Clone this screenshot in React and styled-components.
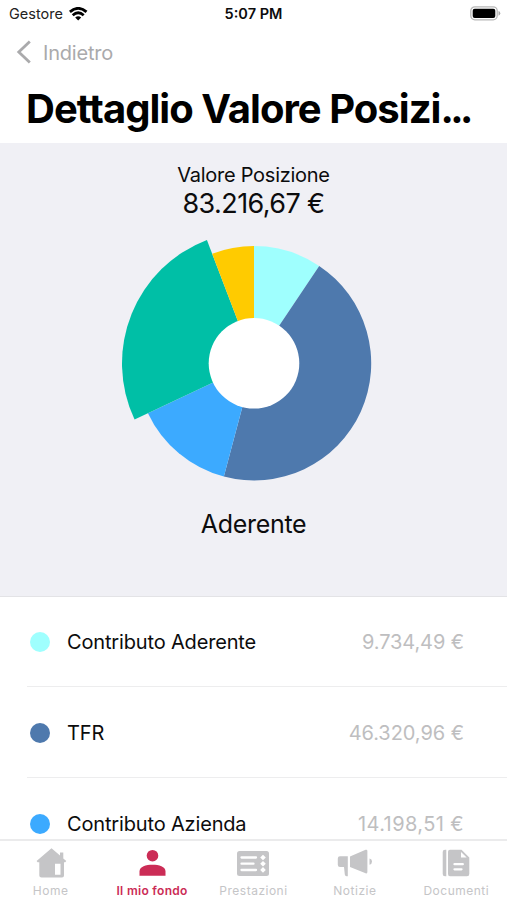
import React from 'react'
import styled, { createGlobalStyle } from 'styled-components'

const slices = [
    { color: '#9ffffe', from: 0, to: 33.8, radius: 117.2 },
    { color: '#4e79ad', from: 33.8, to: 194.9, radius: 117.2 },
    { color: '#3caaff', from: 194.9, to: 244.8, radius: 117.2 },
    { color: '#00bfa6', from: 244.8, to: 339.1, radius: 132 },
    { color: '#ffcb00', from: 339.1, to: 360, radius: 117.2 },
]

const rows = [
    { label: 'Contributo Aderente', value: '9.734,49 €', color: '#9ffffe', space: -0.1 },
    { label: 'TFR', value: '46.320,96 €', color: '#4e79ad', space: -0.05 },
    { label: 'Contributo Azienda', value: '14.198,51 €', color: '#3caaff', space: 0.4 },
]

const point = (angle, radius) => {
    const rad = (angle * Math.PI) / 180
    return `${(Math.sin(rad) * radius).toFixed(2)} ${(-Math.cos(rad) * radius).toFixed(2)}`
}

const slicePath = ({ from, to, radius }) =>
    `M0 0L${point(from, radius)}A${radius} ${radius} 0 ${to - from > 180 ? 1 : 0} 1 ${point(to, radius)}Z`

const HomeIcon = () => (
    <svg width='32' height='30' viewBox='0 0 32 30' fill='currentColor'>
        <path fillRule='evenodd' d='M16.5 0.3L25 7.5V4.5H28.3V10.5L31.3 13L30.2 14.2H29V27.5Q29 29.5 27 29.5H6.5Q4.3 29.5 4.3 27.5V14.2H2.6L1.6 13ZM20 15.8V26.8H25.5V15.8Z' />
    </svg>
)

const PersonIcon = () => (
    <svg width='28' height='28' viewBox='0 0 28 28' fill='currentColor'>
        <circle cx='14.5' cy='6.7' r='5.8' />
        <path d='M1.5 22.5C1.5 17.5 8 15.8 14.5 15.8S27.5 17.5 27.5 22.5V26.8H1.5Z' />
    </svg>
)

const CardIcon = () => (
    <svg width='32' height='25' viewBox='0 0 32 25'>
        <rect width='32' height='25' rx='2.5' fill='currentColor' />
        <path d='M4.5 6.5H19M4.5 12.7H16.5M4.5 19H19' stroke='#fff' strokeWidth='2.3' strokeLinecap='round' />
        <path d='M26 3.7L28.8 6.5L26 9.3L23.2 6.5ZM26 9.9L28.8 12.7L26 15.5L23.2 12.7ZM26 16.1L28.8 18.9L26 21.7L23.2 18.9Z' fill='#fff' />
    </svg>
)

const HornIcon = () => (
    <svg width='36' height='28' viewBox='0 0 36 28' fill='currentColor'>
        <path d='M3 7.2H10.8V27.2H9.6Q8 27.2 7.8 25.5L7 18H3Q.8 18 .8 15.8V9.4Q.8 7.2 3 7.2Z' />
        <path d='M13 7.5L28.6 .8Q30.4 .2 30.4 2V23Q30.4 25 28.6 24.3L13 18Z' />
        <path d='M32.5 9.5Q35 10 35 12.6T32.5 15.7Z' />
    </svg>
)

const DocIcon = () => (
    <svg width='28' height='28' viewBox='0 0 28 28'>
        <path d='M4.3 .7V27.3H3Q.7 27.3 .7 25V3Q.7 .7 3 .7ZM8 .7H19.5L27.3 8.5V25Q27.3 27.3 25 27.3H8Q6 27.3 6 25V2.7Q6 .7 8 .7Z' fill='currentColor' />
        <path d='M19 3V8.5H24.7Z' fill='#fff' />
        <path d='M12.5 15.2H20.8M12.5 20.3H19.5' stroke='#fff' strokeWidth='2.3' strokeLinecap='round' />
    </svg>
)

const tabs = [
    { label: 'Home', icon: HomeIcon, space: 0.6 },
    { label: 'Il mio fondo', icon: PersonIcon, active: true, space: 0.3 },
    { label: 'Prestazioni', icon: CardIcon, space: 0.5 },
    { label: 'Notizie', icon: HornIcon, space: 0.5 },
    { label: 'Documenti', icon: DocIcon, space: 0.5 },
]

export default function App() {
    return (
        <>
            <GlobalStyle />
            <Screen>
                <StatusBar>
                    <Carrier>
                        Gestore
                        <svg width='19' height='14' viewBox='0 0 19 14' fill='none' stroke='#000' strokeWidth='2.8'>
                            <path d='M.9 4.9Q9.2 -2.2 17.5 4.9M3.7 8.2Q9.2 3.4 14.7 8.2' />
                            <path d='M6.2 10.4Q9.2 8 12.2 10.4L9.2 13.5Z' fill='#000' stroke='none' />
                        </svg>
                    </Carrier>
                    <Clock>5:07 PM</Clock>
                    <Battery>
                        <svg width='31' height='15' viewBox='0 0 31 15'>
                            <rect x='.8' y='.8' width='26.4' height='13' rx='4' fill='#fff' stroke='#b8b8b8' strokeWidth='1.3' />
                            <rect x='2.7' y='2.7' width='22.6' height='9.2' rx='2' fill='#000' />
                            <path d='M28.5 5Q30.3 5.6 30.3 7.3T28.5 9.7Z' fill='#aaa' />
                        </svg>
                    </Battery>
                </StatusBar>
                <BackButton>
                    <svg width='15' height='24' viewBox='0 0 15 24' fill='none' stroke='#aaaaac' strokeWidth='2.8'>
                        <path d='M13.8 1.5L2.8 12L13.8 22.5' />
                    </svg>
                    <BackLabel>Indietro</BackLabel>
                </BackButton>
                <Title>Dettaglio Valore Posizi<Dots>...</Dots></Title>
                <Summary>
                    <SummaryLabel>Valore Posizione</SummaryLabel>
                    <SummaryValue>83.216,67 €</SummaryValue>
                    <Chart width='268' height='268' viewBox='-134 -134.3 268 268'>
                        {slices.map((slice) => (
                            <path key={slice.color} d={slicePath(slice)} fill={slice.color} />
                        ))}
                        <circle r='45.3' fill='#fff' />
                    </Chart>
                    <Selected>Aderente</Selected>
                </Summary>
                <List>
                    {rows.map((row) => (
                        <Row key={row.label}>
                            <Dot $color={row.color} />
                            <RowLabel>{row.label}</RowLabel>
                            <RowValue $space={row.space}>{row.value}</RowValue>
                        </Row>
                    ))}
                </List>
                <TabBar>
                    {tabs.map(({ label, icon: Icon, active, space }) => (
                        <Tab key={label} $active={active} $space={space}>
                            <IconBox><Icon /></IconBox>
                            {label}
                        </Tab>
                    ))}
                </TabBar>
            </Screen>
        </>
    )
}

const GlobalStyle = createGlobalStyle`
    * {
        box-sizing:border-box;
    }
    body {
        margin:0;
        background:#fff;
        font-family:Inter, 'Liberation Sans', sans-serif;
    }
    svg {
        display:block;
        flex-shrink:0;
    }
`
const Screen = styled.div`
    width:507px;
    height:900px;
    display:flex;
    flex-direction:column;
    overflow:hidden;
    color:#0c0c0d;
    white-space:nowrap;
`
const StatusBar = styled.div`
    display:grid;
    grid-template-columns:1fr auto 1fr;
    align-items:center;
    height:27px;
    padding:0 6px 0 9px;
`
const Carrier = styled.div`
    display:flex;
    align-items:center;
    gap:6px;
    font-size:14.5px;
    color:#222;
`
const Clock = styled.div`
    margin-right:3px;
    font-size:14.5px;
    font-weight:600;
`
const Battery = styled.div`
    display:flex;
    justify-content:flex-end;
`
const BackButton = styled.div`
    display:flex;
    align-items:center;
    gap:12px;
    height:50px;
    padding-left:16px;
    font-size:20px;
    letter-spacing:-0.2px;
    color:#aaaaac;
`
const BackLabel = styled.span`
    padding-top:2px;
`
const Title = styled.h1`
    margin:0;
    height:66px;
    padding-left:26px;
    font-size:40px;
    line-height:64px;
    font-weight:700;
    letter-spacing:-0.97px;
    color:#000;
`
const Dots = styled.span`
    letter-spacing:-3.6px;
`
const Summary = styled.div`
    display:flex;
    flex-direction:column;
    align-items:center;
    height:454px;
    padding-top:19px;
    background:#f0f0f5;
    border-bottom:1px solid #e3e3e6;
`
const SummaryLabel = styled.div`
    font-size:20px;
    line-height:26px;
    letter-spacing:-0.27px;
`
const SummaryValue = styled.div`
    font-size:27px;
    line-height:32px;
    letter-spacing:-0.6px;
`
const Chart = styled.svg`
    margin-top:9px;
`
const Selected = styled.div`
    margin-top:11px;
    font-size:25px;
    line-height:32px;
    letter-spacing:-0.3px;
`
const List = styled.div`
    flex:1;
    min-height:0;
    overflow:hidden;
`
const RowLabel = styled.span`
    flex:1;
    padding-top:1px;
    letter-spacing:-0.16px;
`
const RowValue = styled.span`
    padding-top:1px;
    letter-spacing:${({ $space }) => $space}px;
    color:#bebec0;
`
const Row = styled.div`
    display:flex;
    align-items:center;
    height:91px;
    margin-left:27px;
    padding:1px 43px 0 3px;
    border-bottom:1px solid #ededee;
    font-size:20px;
    &:first-child {
        height:90px;
    }
    &:first-child ${RowLabel}, &:first-child ${RowValue} {
        padding-top:0;
    }
`
const Dot = styled.span`
    width:20px;
    height:20px;
    margin-right:17px;
    border-radius:50%;
    background:${({ $color }) => $color};
`
const TabBar = styled.div`
    display:grid;
    grid-template-columns:repeat(5, 1fr);
    height:61px;
    border-top:2px solid #ebebec;
    background:#fff;
`
const Tab = styled.div`
    display:flex;
    flex-direction:column;
    align-items:center;
    padding-top:6px;
    font-size:12px;
    line-height:16px;
    letter-spacing:${({ $space }) => $space}px;
    font-weight:${({ $active }) => ($active ? 600 : 400)};
    color:${({ $active }) => ($active ? '#cb2c56' : '#c5c5c7')};
`
const IconBox = styled.div`
    display:flex;
    align-items:center;
    justify-content:center;
    height:32px;
    margin-bottom:4px;
`
